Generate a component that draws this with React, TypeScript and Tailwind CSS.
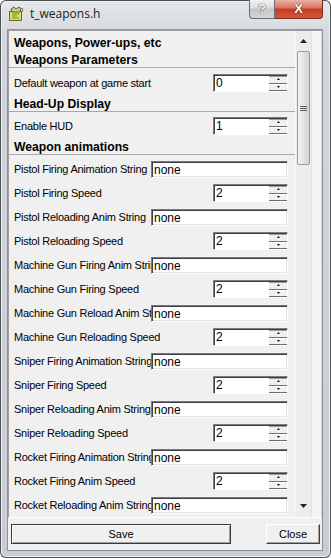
import React from 'react';

type Row = { label: string; kind: 'text' | 'spin'; value: string };

const rows: Row[] = [
  { label: 'Pistol Firing Animation String', kind: 'text', value: 'none' },
  { label: 'Pistol Firing Speed', kind: 'spin', value: '2' },
  { label: 'Pistol Reloading Anim String', kind: 'text', value: 'none' },
  { label: 'Pistol Reloading Speed', kind: 'spin', value: '2' },
  { label: 'Machine Gun Firing Anim String', kind: 'text', value: 'none' },
  { label: 'Machine Gun Firing Speed', kind: 'spin', value: '2' },
  { label: 'Machine Gun Reload Anim String', kind: 'text', value: 'none' },
  { label: 'Machine Gun Reloading Speed', kind: 'spin', value: '2' },
  { label: 'Sniper Firing Animation String', kind: 'text', value: 'none' },
  { label: 'Sniper Firing Speed', kind: 'spin', value: '2' },
  { label: 'Sniper Reloading Anim String', kind: 'text', value: 'none' },
  { label: 'Sniper Reloading Speed', kind: 'spin', value: '2' },
  { label: 'Rocket Firing Animation String', kind: 'text', value: 'none' },
  { label: 'Rocket Firing Anim Speed', kind: 'spin', value: '2' },
  { label: 'Rocket Reloading Anim String', kind: 'text', value: 'none' },
  { label: 'Rocket Reloading Speed', kind: 'spin', value: '2' },
];

const font = "font-['Liberation_Sans',Arial,sans-serif]";

function Arrow({ down }: { down?: boolean }) {
  return (
    <svg width="3" height="2" viewBox="0 0 3 2">
      <path d={down ? 'M0 0h3L1.5 2z' : 'M1.5 0L3 2H0z'} fill="#111" />
    </svg>
  );
}

function SpinBox({ value }: { value: string }) {
  return (
    <div className="flex h-[18px] w-[75px] border border-t-[#7a7a7a] border-l-[#7a7a7a] border-b-white border-r-white bg-white shadow-[inset_1px_1px_0_#404040]">
      <div className="flex-1 pl-[2px] pt-[1px] text-[12px] leading-[14px] text-black">{value}</div>
      <div className="flex w-[18px] flex-col pt-px">
        <div className="flex h-[8px] items-center justify-center border-b border-[#6e6e6e] bg-[#f0f0f0] shadow-[inset_0_1px_0_#9a9a9a]">
          <Arrow />
        </div>
        <div className="flex h-[8px] items-center justify-center border-b border-[#6e6e6e] bg-[#f0f0f0] shadow-[inset_0_1px_0_#fff]">
          <Arrow down />
        </div>
      </div>
    </div>
  );
}

function LineEdit({ value }: { value: string }) {
  return (
    <div className="h-[17px] w-[137px] shrink-0 border border-t-[#7a7a7a] border-l-[#7a7a7a] border-b-white border-r-white bg-white pl-[2px] pt-[1px] text-[12px] leading-[14px] text-black shadow-[inset_1px_1px_0_#404040,inset_-1px_-1px_0_#e3e3e3]">
      {value}
    </div>
  );
}

function Header({ children, line }: { children: React.ReactNode; line?: boolean }) {
  return (
    <div>
      <div className="h-[14px] pl-[5px] text-[12.2px] font-bold leading-[14px] text-black">{children}</div>
      {line && <div className="h-px bg-[#a9a9a9]" />}
    </div>
  );
}

function Label({ children, clip }: { children: React.ReactNode; clip?: boolean }) {
  return (
    <div
      className={`overflow-hidden whitespace-nowrap text-[11px] tracking-[-0.25px] text-black ${
        clip ? 'w-[137px] shrink-0' : 'flex-1'
      }`}
    >
      {children}
    </div>
  );
}

function Scrollbar() {
  return (
    <div className="flex w-[17px] shrink-0 flex-col bg-[#ececec] shadow-[inset_1px_0_0_#f7f7f7,inset_-1px_0_0_#e2e2e2]">
      <div className="flex h-[17px] items-center justify-center pt-[3px]">
        <svg width="7" height="4" viewBox="0 0 7 4">
          <path d="M3.5 0L7 4H0z" fill="#222" />
        </svg>
      </div>
      <div className="mx-[2px] mt-[3px] flex h-[114px] items-center justify-center rounded-[2px] border border-[#9a9a9a] bg-[linear-gradient(to_right,#f4f4f4,#e4e4e4_50%,#d2d2d2)]">
        <div className="flex w-[7px] flex-col gap-[1px]">
          <div className="h-px bg-[#5a5a5a]" />
          <div className="h-px bg-[#5a5a5a]" />
          <div className="h-px bg-[#5a5a5a]" />
        </div>
      </div>
      <div className="flex-1" />
      <div className="flex h-[17px] items-center justify-center pb-[5px]">
        <svg width="7" height="4" viewBox="0 0 7 4">
          <path d="M0 0h7L3.5 4z" fill="#222" />
        </svg>
      </div>
    </div>
  );
}

function AppIcon() {
  return (
    <svg width="16" height="16" viewBox="0 0 16 16">
      <rect x="1.5" y="5.5" width="12" height="9" fill="#d7e05a" stroke="#6b6b2a" />
      <path d="M3 3l3-2 2 2 3-2 2 2-1 3H4z" fill="#c9c9a0" stroke="#5f5f3c" />
      <path d="M4 8h7M4 10h5M4 12h7" stroke="#8a8a2e" />
      <path d="M12 2l3 1-1 3" stroke="#7a7a4a" fill="none" />
    </svg>
  );
}

export default function App() {
  return (
    <div
      className={`${font} relative h-[558px] w-[331px] overflow-hidden rounded-[6px] bg-[linear-gradient(to_bottom,#e6e8eb,#d2d6da_40px,#c9cdd2)] shadow-[inset_0_0_0_1px_#4d5258,inset_0_0_0_2px_#eef0f2]`}
    >
      {/* title bar */}
      <div className="flex h-[29px] items-start pl-[8px] pr-[8px]">
        <div className="mt-[6px]">
          <AppIcon />
        </div>
        <div className="ml-[6px] mt-[6px] font-['Open_Sans','Noto_Sans',sans-serif] text-[12px] leading-[16px] text-[#1b1b1b]">
          t_weapons.h
        </div>
        <div className="ml-auto flex">
          <div className="flex h-[19px] w-[26px] items-center justify-center rounded-bl-[4px] border border-t-0 border-[#6b6f75] bg-[linear-gradient(to_bottom,#f2f2f2,#dadcde_45%,#c3c6c9_50%,#d3d5d8)] text-[13px] font-bold text-white [text-shadow:0_0_1px_#333,0_0_1px_#333]">
            ?
          </div>
          <div className="flex h-[19px] w-[48px] items-center justify-center rounded-br-[4px] border border-l-0 border-t-0 border-[#7d2a1f] bg-[linear-gradient(to_bottom,#eab3a4,#d8715c_45%,#c43b22_50%,#d4583c)] text-[13px] font-bold text-white [text-shadow:0_0_1px_#4a1208,0_0_1px_#4a1208]">
            X
          </div>
        </div>
      </div>

      {/* client area */}
      <div className="ml-[7px] flex h-[522px] w-[316px] flex-col border border-[#8c9299] bg-[#f0f0f0]">
        <div className="flex h-[488px] overflow-hidden border border-t-[#a0a0a0] border-l-[#a0a0a0] border-b-white border-r-[#d8d8d8]">
          <div className="w-[286px] shrink-0 overflow-hidden pt-[5px]">
            <Header>Weapons, Power-ups, etc</Header>
            <div className="h-[3px]" />
            <Header line>Weapons Parameters</Header>
            <div className="flex h-[24px] items-center pl-[5px] pr-[7px] mt-[3px]">
              <Label>Default weapon at game start</Label>
              <SpinBox value="0" />
            </div>
            <div className="h-[2px]" />
            <Header line>Head-Up Display</Header>
            <div className="flex h-[24px] items-center pl-[5px] pr-[7px] mt-[2px]">
              <Label>Enable HUD</Label>
              <SpinBox value="1" />
            </div>
            <div className="h-[2px]" />
            <Header line>Weapon animations</Header>
            <div className="mt-[2px]">
              {rows.map((r) => (
                <div key={r.label} className="flex h-[24px] items-center pl-[5px] pr-[7px]">
                  {r.kind === 'text' ? (
                    <>
                      <Label clip>{r.label}</Label>
                      <LineEdit value={r.value} />
                    </>
                  ) : (
                    <>
                      <Label>{r.label}</Label>
                      <SpinBox value={r.value} />
                    </>
                  )}
                </div>
              ))}
            </div>
          </div>
          <Scrollbar />
          <div className="flex-1 bg-[#f4f4f4]" />
        </div>

        <div className="mt-[6px] flex h-[20px] items-stretch pl-[3px] pr-[2px] text-[11px] text-black">
          <button className="w-[220px] border border-[#3a3a3a] bg-[#f0f0f0] shadow-[inset_1px_1px_0_#fff,inset_-1px_-1px_0_#a0a0a0]">
            Save
          </button>
          <button className="ml-auto w-[54px] border border-t-white border-l-white border-b-[#404040] border-r-[#404040] bg-[#f0f0f0] shadow-[inset_-1px_-1px_0_#a0a0a0]">
            Close
          </button>
        </div>
      </div>
    </div>
  );
}
